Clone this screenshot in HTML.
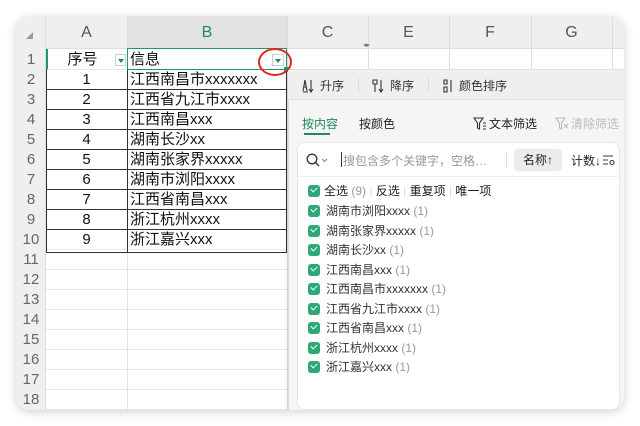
<!DOCTYPE html>
<html><head><meta charset="utf-8"><style>
*{margin:0;padding:0;box-sizing:border-box}
body{width:640px;height:426px;background:#fff;position:relative;overflow:hidden;font-family:"Liberation Sans","Noto Sans CJK SC",sans-serif;color:#222}
.win{position:absolute;left:16px;top:16px;width:608px;height:394px;border-radius:14px;background:#fff;box-shadow:0 2px 10px rgba(0,0,0,.18);overflow:hidden}
.a{position:absolute}
.hdr{background:#efefef}
.t{font-size:15px;line-height:20px}
.cb{position:absolute;left:20px;width:12px;height:12px;border-radius:3px;background:#2fa877}
.cb:after{content:"";position:absolute;left:3px;top:2px;width:5px;height:3px;border-left:1.5px solid #fff;border-bottom:1.5px solid #fff;transform:rotate(-45deg)}
.it{position:absolute;left:38px;font-size:12px;color:#333;line-height:16px}
.it span{color:#999}
svg{position:absolute}
</style></head><body>
<div class="win">
 <div class="a hdr" style="left:0;top:0;width:608px;height:33px;border-bottom:1px solid #ddd"></div>
 <div class="a" style="left:111px;top:0;width:160px;height:33px;background:#e2e2e2"></div>
 <div class="a" style="left:0;top:0;width:30px;height:394px;background:#efefef;border-right:1px solid #ddd"></div>
 <div class="a" style="left:10px;top:16px;width:0;height:0;border-left:7px solid transparent;border-bottom:7px solid #999"></div>
 <div class="a t" style="left:30px;top:7px;width:81px;text-align:center;color:#555;font-size:16px">A</div>
 <div class="a t" style="left:111px;top:7px;width:160px;text-align:center;color:#1e8a5a;font-size:16px">B</div>
 <div class="a t" style="left:271px;top:7px;width:81px;text-align:center;color:#555;font-size:16px">C</div>
 <div class="a t" style="left:352px;top:7px;width:81px;text-align:center;color:#555;font-size:16px">E</div>
 <div class="a t" style="left:433px;top:7px;width:82px;text-align:center;color:#555;font-size:16px">F</div>
 <div class="a t" style="left:515px;top:7px;width:81px;text-align:center;color:#555;font-size:16px">G</div>
 <div class="a" style="left:271px;top:0;width:1px;height:54px;background:#ddd"></div>
 <div class="a" style="left:352px;top:0;width:1px;height:54px;background:#ddd"></div>
 <div class="a" style="left:433px;top:0;width:1px;height:54px;background:#ddd"></div>
 <div class="a" style="left:515px;top:0;width:1px;height:54px;background:#ddd"></div>
 <div class="a" style="left:596px;top:0;width:1px;height:54px;background:#ddd"></div>
 <div class="a" style="left:347px;top:25px;font-size:7px;color:#777">◂▸</div>
 <div id="g"></div>
 <div class="a" style="left:111px;top:33px;width:1px;height:361px;background:#e4e4e4"></div>
 <div class="a" style="left:271px;top:33px;width:1px;height:361px;background:#ddd"></div>
 <div class="a" style="left:30px;top:53px;width:241px;height:184px;border:1px solid #333;border-top:none"></div>
 <div class="a" style="left:111px;top:53px;width:1px;height:184px;background:#333"></div>
 <div class="a" style="left:111px;top:32px;width:160px;height:22px;border:1.5px solid #1e9a64"></div>
 <div class="a" style="left:30px;top:33px;width:2px;height:20px;background:#1e9a64"></div>
 <div class="a" style="left:268px;top:51px;width:5px;height:5px;background:#1e9a64"></div>
 <div class="a" style="left:99px;top:38px;width:11px;height:12px;background:#fff;border:1px solid #ccc"></div>
 <div class="a" style="left:102px;top:43px;border-left:3px solid transparent;border-right:3px solid transparent;border-top:4px solid #1e8a5a"></div>
 <div class="a" style="left:256px;top:38px;width:12px;height:12px;background:#fff;border:1px solid #ccc"></div>
 <div class="a" style="left:259px;top:43px;border-left:3.5px solid transparent;border-right:3.5px solid transparent;border-top:4px solid #1e8a5a"></div>
 <div class="a" style="left:242px;top:32px;width:34px;height:28px;border:2px solid #e0261f;border-radius:50%"></div>
 <div id="rows"></div>
 <!-- filter panel -->
 <div class="a" style="left:272px;top:54px;width:336px;height:340px;background:#f5f5f5;border-left:1px solid #ddd;box-shadow:-2px 0 4px rgba(0,0,0,.06)"></div>
 <div class="a" style="left:272px;top:54px;width:336px;height:30px;background:#efefef;border-bottom:1px solid #e2e2e2"></div>
 <svg style="left:286px;top:63px" width="16" height="14" viewBox="0 0 16 14" fill="none" stroke="#333" stroke-width="1.1"><path d="M1 12L3 1L5 12M2 8h2M1 13h5M9 1v12M11 10l-2 3l-2-3"/></svg>
 <div class="a" style="left:304px;top:61px;font-size:12px;color:#333">升序</div>
 <div class="a" style="left:342px;top:62px;width:1px;height:14px;background:#ddd"></div>
 <svg style="left:356px;top:63px" width="16" height="14" viewBox="0 0 16 14" fill="none" stroke="#333" stroke-width="1.1"><path d="M1 1h4v4H1zM3 5v8M9 1v12M11 10l-2 3l-2-3"/></svg>
 <div class="a" style="left:374px;top:61px;font-size:12px;color:#333">降序</div>
 <div class="a" style="left:412px;top:62px;width:1px;height:14px;background:#ddd"></div>
 <svg style="left:427px;top:63px" width="14" height="14" viewBox="0 0 14 14" fill="none" stroke="#333" stroke-width="1.1"><path d="M1 1h3v4H1zM1 8h3v5H1zM8 1v12"/></svg>
 <div class="a" style="left:443px;top:61px;font-size:12px;color:#333">颜色排序</div>
 <div class="a" style="left:286px;top:99px;font-size:12px;color:#1e8a5a">按内容</div>
 <div class="a" style="left:288px;top:117px;width:26px;height:2px;background:#1e8a5a"></div>
 <div class="a" style="left:343px;top:99px;font-size:12px;color:#222">按颜色</div>
 <svg style="left:457px;top:101px" width="14" height="13" viewBox="0 0 14 13" fill="none" stroke="#333" stroke-width="1.1"><path d="M1 1h9L6.5 6v6L4.5 11V6z M10 6h3M10 9h3M10 12h3"/></svg>
 <div class="a" style="left:473px;top:99px;font-size:12px;color:#222">文本筛选</div>
 <svg style="left:539px;top:101px" width="14" height="13" viewBox="0 0 14 13" fill="none" stroke="#bbb" stroke-width="1.1"><path d="M1 1h9L6.5 6v6L4.5 11V6z M9 7l4 4M13 7l-4 4"/></svg>
 <div class="a" style="left:555px;top:99px;font-size:12px;color:#bbb">清除筛选</div>
 <div class="a" style="left:281px;top:126px;width:323px;height:268px;background:#fff;border:1px solid #e6e6e6;border-radius:8px"></div>
 <div class="a" style="left:281px;top:160px;width:323px;height:1px;background:#eee"></div>
 <svg style="left:290px;top:137px" width="14" height="14" viewBox="0 0 14 14" fill="none" stroke="#333" stroke-width="1.3"><circle cx="6" cy="6" r="4.8"/><path d="M9.5 9.5L13 13"/></svg>
 <svg style="left:305px;top:142px" width="7" height="5" viewBox="0 0 7 5" fill="none" stroke="#888"><path d="M1 1l2.5 2.5L6 1"/></svg>
 <div class="a" style="left:325px;top:136px;width:1px;height:15px;background:#333"></div>
 <div class="a" style="left:327px;top:136px;font-size:12px;color:#999">搜包含多个关键字，空格…</div>
 <div class="a" style="left:490px;top:137px;width:1px;height:14px;background:#ddd"></div>
 <div class="a" style="left:498px;top:133px;width:48px;height:22px;background:#ececec;border-radius:4px;font-size:12px;line-height:22px;text-align:center;color:#222">名称↑</div>
 <div class="a" style="left:555px;top:136px;font-size:12px;color:#222">计数↓</div>
 <svg style="left:586px;top:138px" width="14" height="12" viewBox="0 0 14 12" fill="none" stroke="#333" stroke-width="1.1"><path d="M1 2h10M1 6h5M1 10h5"/><circle cx="10" cy="8.5" r="2"/></svg>
 <div id="list" class="a" style="left:281px;top:0;width:320px;height:394px"></div>
</div>
<script>
var g='',r='';
for(var i=1;i<=18;i++){var ty=33+20*(i-1);
 r+='<div class="a t" style="left:0;top:'+(ty+1)+'px;width:30px;text-align:center;color:#666;font-size:15px">'+i+'</div>';
 g+='<div class="a" style="left:30px;top:'+(ty+20)+'px;width:578px;height:1px;background:#e6e6e6"></div>';}
var A=['序号','1','2','3','4','5','6','7','8','9'];
var B=['信息','江西南昌市xxxxxxx','江西省九江市xxxx','江西南昌xxx','湖南长沙xx','湖南张家界xxxxx','湖南市浏阳xxxx','江西省南昌xxx','浙江杭州xxxx','浙江嘉兴xxx'];
for(var j=0;j<10;j++){var tp=33+20*j+1;
 r+='<div class="a t" style="left:'+(j==0?26:30)+'px;top:'+tp+'px;width:81px;text-align:center;color:#111">'+A[j]+'</div>';
 r+='<div class="a t" style="left:114px;top:'+tp+'px;color:#111">'+B[j]+'</div>';
 if(j>0&&j<9) g+='<div class="a" style="left:30px;top:'+(33+20*j+20)+'px;width:241px;height:1px;background:#333"></div>';}
document.getElementById('g').innerHTML=g;document.getElementById('rows').innerHTML=r;
var L=['湖南市浏阳xxxx','湖南张家界xxxxx','湖南长沙xx','江西南昌xxx','江西南昌市xxxxxxx','江西省九江市xxxx','江西省南昌xxx','浙江杭州xxxx','浙江嘉兴xxx'];
var h='<div class="cb" style="left:11px;top:169px"></div><div class="it" style="left:27px;top:167px;font-size:12px;color:#222">全选 <span>(9)</span> <span style="color:#ddd">|</span> 反选 <span style="color:#ddd">|</span> 重复项 <span style="color:#ddd">|</span> 唯一项</div>';
for(var k=0;k<9;k++){var y=189+19.5*k;
 h+='<div class="cb" style="left:11px;top:'+y+'px"></div><div class="it" style="left:29px;top:'+(y-2)+'px">'+L[k]+' <span>(1)</span></div>';}
document.getElementById('list').innerHTML=h;
</script>
</body></html>
